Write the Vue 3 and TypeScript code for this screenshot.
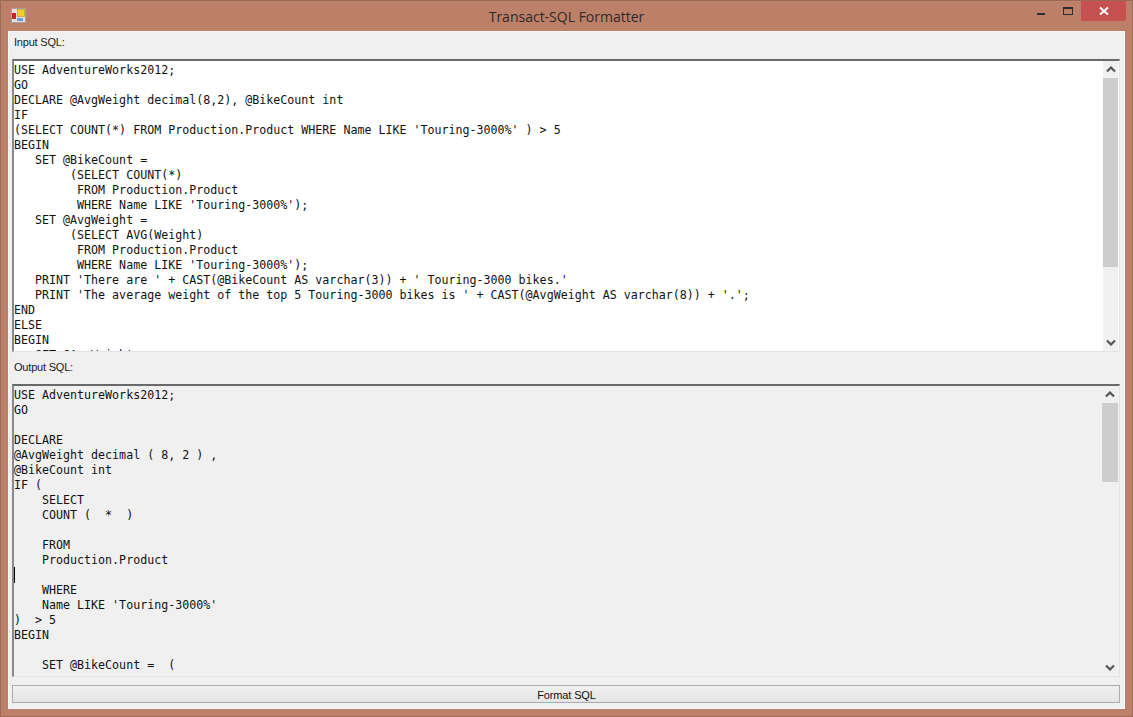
<script setup lang="ts">
const inputLines: string[] = [
  "USE AdventureWorks2012;",
  "GO",
  "DECLARE @AvgWeight decimal(8,2), @BikeCount int",
  "IF",
  "(SELECT COUNT(*) FROM Production.Product WHERE Name LIKE 'Touring-3000%' ) > 5",
  "BEGIN",
  "   SET @BikeCount =",
  "        (SELECT COUNT(*)",
  "         FROM Production.Product",
  "         WHERE Name LIKE 'Touring-3000%');",
  "   SET @AvgWeight =",
  "        (SELECT AVG(Weight)",
  "         FROM Production.Product",
  "         WHERE Name LIKE 'Touring-3000%');",
  "   PRINT 'There are ' + CAST(@BikeCount AS varchar(3)) + ' Touring-3000 bikes.'",
  "   PRINT 'The average weight of the top 5 Touring-3000 bikes is ' + CAST(@AvgWeight AS varchar(8)) + '.';",
  "END",
  "ELSE",
  "BEGIN",
  "   SET @AvgWeight =",
];
const outputLines: string[] = [
  "USE AdventureWorks2012;",
  "GO",
  "",
  "DECLARE",
  "@AvgWeight decimal ( 8, 2 ) ,",
  "@BikeCount int",
  "IF (",
  "    SELECT",
  "    COUNT (  *  )",
  "",
  "    FROM",
  "    Production.Product",
  "",
  "    WHERE",
  "    Name LIKE 'Touring-3000%'",
  ")  > 5",
  "BEGIN",
  "",
  "    SET @BikeCount =  (",
];
</script>

<template>
  <div class="window">
    <header class="titlebar">
      <svg class="app-icon" width="15" height="15" viewBox="0 0 15 15">
        <rect x="0.5" y="0.5" width="14" height="14" fill="#e4e0dc" stroke="#a5a09c" />
        <rect x="6.5" y="1.5" width="7" height="7" fill="#f6cb2e" stroke="#c09a20" stroke-width="0.7" />
        <rect x="1" y="5" width="4" height="6" fill="#c8241e" />
        <rect x="6" y="10" width="6" height="3" fill="#6a9ae0" />
      </svg>
      <span class="title">Transact-SQL Formatter</span>
      <div class="controls">
        <span class="ctl min"><i></i></span>
        <span class="ctl max"><i></i></span>
        <span class="ctl close">
          <svg width="10" height="10" viewBox="0 0 10 10">
            <path d="M1 1.5 L9 8.5 M9 1.5 L1 8.5" stroke="#fff" stroke-width="2" fill="none" />
          </svg>
        </span>
      </div>
    </header>
    <main class="client">
      <label class="caption">Input SQL:</label>
      <section class="editor white">
        <pre class="code"><template v-for="(line, i) in inputLines" :key="i">{{ line }}
</template></pre>
        <div class="scrollbar">
          <span class="arrow"><svg width="10" height="7" viewBox="0 0 10 7"><path d="M1 5.5 L5 1.5 L9 5.5" stroke="#555" stroke-width="2.2" fill="none" /></svg></span>
          <div class="track"><div class="thumb first"></div></div>
          <span class="arrow"><svg width="10" height="7" viewBox="0 0 10 7"><path d="M1 1.5 L5 5.5 L9 1.5" stroke="#555" stroke-width="2.2" fill="none" /></svg></span>
        </div>
      </section>
      <label class="caption second">Output SQL:</label>
      <section class="editor grey">
        <pre class="code"><template v-for="(line, i) in outputLines" :key="i">{{ line }}
</template></pre>
        <i class="caret"></i>
        <div class="scrollbar wide">
          <span class="arrow"><svg width="10" height="7" viewBox="0 0 10 7"><path d="M1 5.5 L5 1.5 L9 5.5" stroke="#555" stroke-width="2.2" fill="none" /></svg></span>
          <div class="track"><div class="thumb second-thumb"></div></div>
          <span class="arrow"><svg width="10" height="7" viewBox="0 0 10 7"><path d="M1 1.5 L5 5.5 L9 1.5" stroke="#555" stroke-width="2.2" fill="none" /></svg></span>
        </div>
      </section>
      <button class="format">Format SQL</button>
    </main>
  </div>
</template>

<style>
html, body { margin: 0; padding: 0; overflow: hidden; }
</style>

<style scoped>
.window {
  width: 1133px;
  height: 717px;
  box-sizing: border-box;
  background: #bc8068;
  border: 1px solid #9a6a58;
  display: flex;
  flex-direction: column;
  padding: 0 7px 7px;
  font-family: "Liberation Sans", Arial, sans-serif;
}
.titlebar {
  height: 30px;
  flex: none;
  display: flex;
  align-items: flex-start;
  position: relative;
}
.app-icon { margin: 7px 0 0 3px; }
.title {
  position: absolute;
  left: 0;
  right: 0;
  top: 6px;
  text-align: center;
  font-family: "Open Sans", sans-serif;
  font-size: 14px;
  line-height: 19px;
  color: #2e2a29;
}
.controls {
  position: absolute;
  right: -1px;
  top: 0;
  display: flex;
}
.ctl { display: flex; align-items: center; justify-content: center; height: 20px; width: 26px; }
.ctl.min { margin-right: 1px; }
.ctl.min i { display: block; width: 8px; height: 2px; background: #2c2c2c; margin-top: 6px; }
.ctl.max i { display: block; width: 8px; height: 5px; border: 1px solid #2c2c2c; border-top-width: 2px; }
.ctl.close { width: 45px; background: #c75050; }
.client {
  flex: 1;
  background: #f0f0f0;
  border: 1px solid #f7f7f7;
  border-right-color: #fff;
  display: flex;
  flex-direction: column;
  padding: 0 4px 5px 3px;
  min-height: 0;
}
.caption {
  height: 27px;
  flex: none;
  font-size: 11px;
  line-height: 13px;
  padding-top: 4px;
  padding-left: 2px;
  box-sizing: border-box;
  color: #1a1a1a;
  letter-spacing: -0.2px;
}
.caption.second { height: 32px; padding-top: 9px; }
.editor {
  height: 293px;
  flex: none;
  display: flex;
  box-sizing: border-box;
  border-top: 2px solid #696969;
  border-left: 2px solid #8a8a8a;
  border-right: 1px solid #e4e4e4;
  border-bottom: 1px solid #e4e4e4;
  position: relative;
  overflow: hidden;
}
.editor.white { background: #fff; }
.editor.grey { background: #f0f0f0; }
.code {
  flex: 1;
  min-width: 0;
  margin: 0;
  padding: 2px 0 0 0;
  font-family: "DejaVu Sans Mono", monospace;
  font-size: 11.65px;
  line-height: 15px;
  color: #111;
  overflow: hidden;
  white-space: pre;
}
.caret {
  position: absolute;
  left: 0;
  top: 181px;
  width: 1px;
  height: 16px;
  background: #000;
}
.scrollbar {
  width: 15px;
  margin-right: 1px;
  flex: none;
  display: flex;
  flex-direction: column;
  background: #f0f0f0;
}
.scrollbar.wide { width: 16px; }
.arrow {
  height: 17px;
  flex: none;
  display: flex;
  align-items: center;
  justify-content: center;
}
.track { flex: 1; min-height: 0; }
.thumb { background: #cdcdcd; }
.thumb.first { height: 189px; }
.thumb.second-thumb { height: 79px; }
.format {
  margin-top: 8px;
  height: 18px;
  flex: none;
  box-sizing: border-box;
  border: 1px solid #acacac;
  background: linear-gradient(#f0f0f0, #e5e5e5);
  font-family: "Liberation Sans", Arial, sans-serif;
  font-size: 11px;
  color: #111;
  padding: 1px 0 0 1px;
  letter-spacing: -0.15px;
}
</style>
